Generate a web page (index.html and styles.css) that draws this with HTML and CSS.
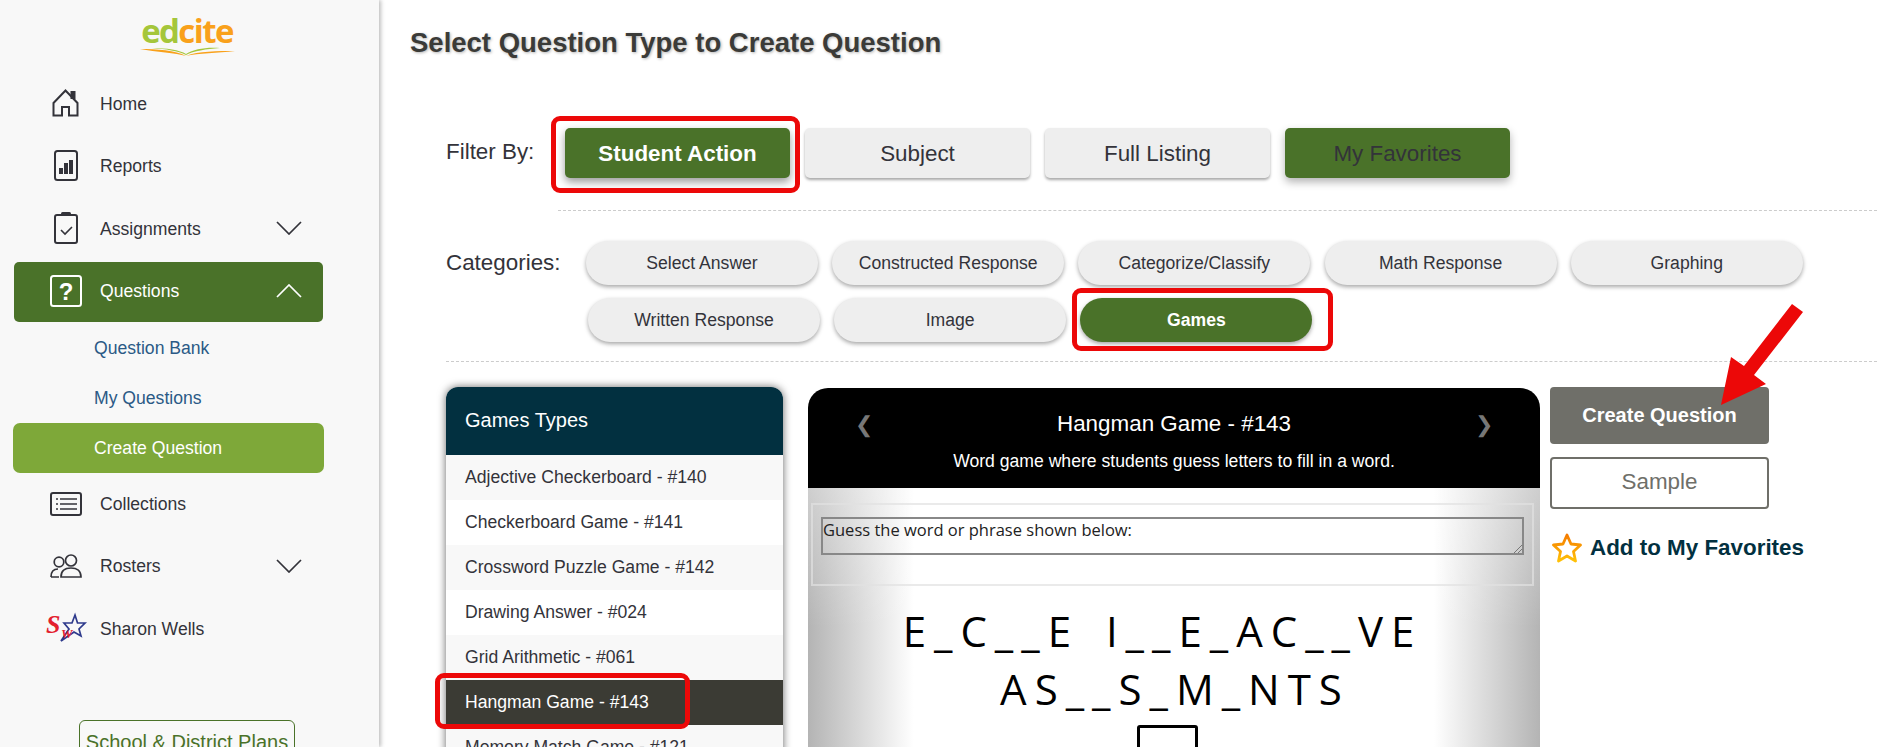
FILE: index.html
```html
<!DOCTYPE html>
<html lang="en">
  <head>
    <meta charset="UTF-8" />
    <meta name="viewport" content="width=device-width, initial-scale=1.0" />
    <title>Select Question Type</title>
    <link rel="stylesheet" href="styles.css">
  </head>
  <body>
    <div class="sidebar">
      <div class="logo">
        <div class="logo-word"><span class="logo-ed">ed</span><span class="logo-cite">cite</span></div>
        <svg class="logo-book" width="95" height="9" viewBox="0 0 95 9">
          <path d="M0 2 C16 2 36 3 46 9 C36 6 16 5 0 2Z" fill="#f9a11b" />
          <path d="M46 9 C58 4 78 4 95 4 C78 6 58 6 46 9Z" fill="#f9a11b" />
          <path d="M12 1 C26 1 40 3 46 7 C54 2 66 0 80 1 C66 2 54 4 46 8 C38 4 26 2 12 1Z" fill="#a5c63b" />
        </svg>
      </div>

      <div class="nav">
        <div class="nav-row">
          <span class="nav-icon">
            <svg width="30" height="30" viewBox="0 0 30 30" fill="none" stroke="#33333a" stroke-width="2">
              <path d="M2.5 14 L14.5 1.5 L26.5 14 V26.5 H18 V18 H11 V26.5 H2.5Z" />
              <rect x="19.5" y="2" width="5" height="8" fill="#33333a" stroke="none" />
            </svg>
          </span>
          <span>Home</span>
        </div>
        <div class="nav-row">
          <span class="nav-icon">
            <svg width="30" height="32" viewBox="0 0 30 32" fill="none" stroke="#33333a" stroke-width="2">
              <rect x="4" y="1" width="22" height="29" rx="2.5" />
              <rect x="8" y="18" width="4" height="6" fill="#33333a" stroke="none" />
              <rect x="13" y="13" width="4" height="11" fill="#33333a" stroke="none" />
              <rect x="18" y="10" width="4" height="14" fill="#33333a" stroke="none" />
            </svg>
          </span>
          <span>Reports</span>
        </div>
        <div class="nav-row">
          <span class="nav-icon">
            <svg width="30" height="32" viewBox="0 0 30 32" fill="none" stroke="#33333a" stroke-width="2">
              <rect x="4" y="3" width="22" height="28" rx="2" />
              <rect x="10" y="0" width="10" height="4" rx="1.5" fill="#33333a" stroke="none" />
              <path d="M10 18 L14 22 L21 15" stroke-width="1.6" />
            </svg>
          </span>
          <span class="text-low">Assignments</span>
          <svg class="chevron" width="26" height="14" viewBox="0 0 26 14" fill="none" stroke="#33333a" stroke-width="1.7"><path d="M1 1 L13 13 L25 1" /></svg>
        </div>
        <div class="nav-row nav-open">
          <span class="nav-icon">
            <svg width="32" height="32" viewBox="0 0 32 32" fill="none" stroke="#fff" stroke-width="2">
              <rect x="1" y="1" width="30" height="30" rx="2.5" />
              <text x="16" y="25" text-anchor="middle" class="question-mark">?</text>
            </svg>
          </span>
          <span>Questions</span>
          <svg class="chevron" width="26" height="14" viewBox="0 0 26 14" fill="none" stroke="#fff" stroke-width="1.7"><path d="M1 13 L13 1 L25 13" /></svg>
        </div>
        <div class="sub-row">Question Bank</div>
        <div class="sub-row">My Questions</div>
        <div class="sub-row sub-current">Create Question</div>
        <div class="nav-row">
          <span class="nav-icon">
            <svg width="32" height="24" viewBox="0 0 32 24" fill="none" stroke="#33333a" stroke-width="2">
              <rect x="1" y="1" width="30" height="22" rx="2" />
              <path d="M10 7 H27 M10 12 H27 M10 17 H27" stroke-width="1.5" />
              <path d="M6 7 H8 M6 12 H8 M6 17 H8" stroke-width="1.5" />
            </svg>
          </span>
          <span>Collections</span>
        </div>
        <div class="nav-row">
          <span class="nav-icon">
            <svg width="32" height="24" viewBox="0 0 32 24" fill="none" stroke="#33333a" stroke-width="1.7">
              <circle cx="9" cy="8" r="4.8" />
              <circle cx="21" cy="6.5" r="5.5" />
              <path d="M1 23 C1 17 4 15 8 15 M1 23 H9" />
              <path d="M11 23 C11 17 15 14 21 14 C27 14 31 17 31 23Z" />
            </svg>
          </span>
          <span>Rosters</span>
          <svg class="chevron" width="26" height="14" viewBox="0 0 26 14" fill="none" stroke="#33333a" stroke-width="1.7"><path d="M1 1 L13 13 L25 1" /></svg>
        </div>
        <div class="nav-row">
          <span class="nav-icon">
            <svg width="40" height="30" viewBox="0 0 40 30">
              <path d="M29 2 L31.5 10 L39 10 L33 16 L35 23 L28 19 L15 28 L23 16 L18 10 L26 10Z" fill="none" stroke="#2e3a8c" stroke-width="1.7" />
              <text x="0" y="20" class="sw-s">S</text>
              <text x="15" y="25" class="sw-w">W</text>
            </svg>
          </span>
          <span class="text-low">Sharon Wells</span>
        </div>
      </div>

      <div class="plans">School &amp; District Plans</div>
    </div>

    <div class="main">
      <h1>Select Question Type to Create Question</h1>

      <div class="filter-row">
        <span class="row-label filter-label">Filter By:</span>
        <button class="filter-btn current marked mark-action">Student Action</button>
        <button class="filter-btn">Subject</button>
        <button class="filter-btn">Full Listing</button>
        <button class="filter-btn favorites">My Favorites</button>
      </div>

      <div class="filter-line"></div>

      <div class="category-block">
        <span class="row-label category-label">Categories:</span>
        <div class="pills">
          <div class="pill-row">
            <button class="pill">Select Answer</button>
            <button class="pill">Constructed Response</button>
            <button class="pill">Categorize/Classify</button>
            <button class="pill">Math Response</button>
            <button class="pill">Graphing</button>
          </div>
          <div class="pill-row second">
            <button class="pill">Written Response</button>
            <button class="pill">Image</button>
            <button class="pill current marked mark-games">Games</button>
          </div>
        </div>
      </div>

      <div class="category-line"></div>

      <div class="content">
        <div class="types">
          <div class="types-head">Games Types</div>
          <div class="type-item">Adjective Checkerboard - #140</div>
          <div class="type-item">Checkerboard Game - #141</div>
          <div class="type-item">Crossword Puzzle Game - #142</div>
          <div class="type-item">Drawing Answer - #024</div>
          <div class="type-item">Grid Arithmetic - #061</div>
          <div class="type-item selected marked mark-hangman">Hangman Game - #143</div>
          <div class="type-item">Memory Match Game - #121</div>
        </div>

        <div class="preview">
          <div class="preview-head">
            <span class="preview-arrow prev">&#10094;</span>
            <div class="preview-title">Hangman Game - #143</div>
            <div class="preview-desc">Word game where students guess letters to fill in a word.</div>
            <span class="preview-arrow next">&#10095;</span>
          </div>
          <div class="preview-body">
            <div class="prompt-box">
              <div class="prompt-input">Guess the word or phrase shown below:
                <svg class="resize-grip" width="9" height="9" viewBox="0 0 9 9" stroke="#777" fill="none"><path d="M1 9 L9 1 M5 9 L9 5" /></svg>
              </div>
            </div>
            <div class="word word-one">E_C__E I__E_AC__VE</div>
            <div class="word word-two">AS__S_M_NTS</div>
            <div class="letter-box"></div>
          </div>
        </div>

        <div class="actions">
          <button class="create-btn">Create Question</button>
          <button class="sample-btn">Sample</button>
          <div class="add-fav">
            <svg width="30" height="30" viewBox="0 0 30 30" fill="none" stroke="url(#starFill)" stroke-width="2.8" stroke-linejoin="round">
              <defs>
                <linearGradient id="starFill" x1="0" y1="0" x2="0" y2="1">
                  <stop offset="0" stop-color="#f57c00" />
                  <stop offset="1" stop-color="#ffc107" />
                </linearGradient>
              </defs>
              <path d="M15 2 L19 11 L28.5 12 L21.5 18.5 L23.5 28 L15 23 L6.5 28 L8.5 18.5 L1.5 12 L11 11Z" />
            </svg>
            <span>Add to My Favorites</span>
          </div>
        </div>
      </div>

      <!-- big red arrow pointing at the create button -->
      <svg class="red-arrow" width="90" height="110" viewBox="0 0 90 110">
        <path d="M79 2 L90 10 L41 73 L53 82 L8 103 L18 55 L31 64Z" fill="#ec0808" />
      </svg>
    </div>
  </body>
</html>
```

FILE: styles.css
```css
html,
body {
  height: 100%;
  margin: 0;
  overflow: hidden;
}

body {
  display: flex;
  font-family: "Liberation Sans", Arial, sans-serif;
  color: #33333a;
  background-color: #fff;
}

button {
  font-family: inherit;
  border: none;
  cursor: pointer;
}

/* Left navigation */
.sidebar {
  flex: 0 0 379px;
  box-sizing: border-box;
  height: 747px;
  overflow: hidden;
  background-color: #f8f8f8;
  box-shadow: 2px 0 4px rgba(0, 0, 0, 0.25);
  position: relative;
  z-index: 1;
}

.logo {
  height: 73px;
  display: flex;
  flex-direction: column;
  align-items: center;
  padding: 11px 5px 0 0;
  box-sizing: border-box;
}

.logo-word {
  font-family: "Open Sans", sans-serif;
  font-size: 33px;
  font-weight: 700;
  line-height: 40px;
  letter-spacing: -1.6px;
}

.logo-ed {
  color: #a5c63b;
}

.logo-cite {
  color: #f9a11b;
}

.logo-book {
  margin-top: -4px;
}

.nav-row {
  display: flex;
  align-items: center;
  height: 62px;
  padding-left: 46px;
  margin: 0 56px 0 14px;
  font-size: 17.6px;
}

.nav-icon {
  flex: 0 0 40px;
  margin-left: -14px;
  margin-right: 14px;
  display: flex;
  justify-content: center;
}

.nav-icon svg {
  overflow: visible;
}

.text-low {
  padding-top: 2px;
}

.nav-row .chevron {
  margin-left: auto;
  margin-right: 21px;
}

.nav-open {
  height: 60px;
  box-sizing: border-box;
  padding-bottom: 2px;
  margin-top: 3px;
  background-color: #4a7229;
  color: #fff;
  border-radius: 5px;
}

.sub-row {
  height: 50px;
  line-height: 52px;
  padding-left: 94px;
  font-size: 17.6px;
  color: #2b5a86;
}

.sub-current {
  margin: 1px 55px 0 13px;
  padding-left: 81px;
  line-height: 50px;
  background-color: #7ea839;
  color: #fff;
  border-radius: 7px;
}

.question-mark {
  font-family: "Liberation Sans", sans-serif;
  font-size: 24px;
  font-weight: bold;
  fill: #fff;
  stroke: none;
}

.sw-s {
  font-family: "Liberation Serif", serif;
  font-style: italic;
  font-weight: bold;
  font-size: 26px;
  fill: #e3202e;
}

.sw-w {
  font-family: "Liberation Serif", serif;
  font-style: italic;
  font-weight: bold;
  font-size: 13px;
  fill: #e3202e;
}

.plans {
  margin: 61px 84px 0 79px;
  height: 44px;
  line-height: 42px;
  text-align: center;
  font-size: 20px;
  color: #4a7229;
  border: 1px solid #4a7229;
  border-radius: 6px;
  box-sizing: border-box;
}

/* Main area */
.main {
  flex: 1;
  min-width: 0;
  height: 747px;
  overflow: hidden;
  position: relative;
}

h1 {
  margin: 28px 0 0 31px;
  font-size: 27.5px;
  line-height: 30px;
  font-weight: bold;
  color: #3b3b38;
  text-shadow: 1px 1px 3px rgba(0, 0, 0, 0.3);
}

.filter-row {
  display: flex;
  align-items: center;
  gap: 15px;
  margin: 70px 0 0 67px;
}

.row-label {
  font-size: 22.4px;
  color: #33333a;
}

.filter-label {
  flex: 0 0 108px;
  margin-right: -4px;
  position: relative;
  top: -1px;
}

.filter-btn {
  width: 225px;
  height: 50px;
  padding-top: 2px;
  background-color: #eee;
  color: #33333a;
  font-size: 22.4px;
  border-radius: 5px;
  box-shadow: 0 2px 3px rgba(0, 0, 0, 0.35);
}

.filter-btn.current {
  background-color: #4a7229;
  color: #fff;
  font-weight: bold;
  box-shadow: 0 4px 8px rgba(0, 0, 0, 0.4);
}

.filter-btn.favorites {
  background-color: #4a7229;
  box-shadow: 0 4px 8px rgba(0, 0, 0, 0.3);
}

.filter-line {
  margin: 32px 0 0 179px;
  border-top: 1px dashed #ccc;
}

.category-block {
  display: flex;
  margin: 30px 0 0 67px;
}

.category-label {
  flex: 0 0 140px;
  line-height: 44px;
}

.pill-row {
  display: flex;
  gap: 14.2px;
}

.pill-row.second {
  margin: 13px 0 0 2px;
}

.pill {
  width: 232px;
  height: 44px;
  background-color: #eee;
  color: #33333a;
  font-size: 17.6px;
  border-radius: 22px;
  box-shadow: 0 2px 4px rgba(0, 0, 0, 0.35);
}

.pill.current {
  background-color: #4a7229;
  color: #fff;
  font-weight: bold;
}

.category-line {
  margin: 19px 0 0 67px;
  border-top: 1px dashed #ccc;
}

/* Red annotation boxes drawn over the picked options */
.marked {
  position: relative;
}

.marked::after {
  content: "";
  position: absolute;
  border: 5px solid #ec0808;
  border-radius: 9px;
  pointer-events: none;
}

.mark-action::after {
  inset: -12px -10px -15px -14px;
}

.mark-games::after {
  inset: -10px -21px -9px -8px;
}

.mark-hangman::after {
  inset: -7px auto -4px -11px;
  width: 245px;
}

.content {
  display: flex;
  align-items: flex-start;
  margin: 25px 0 0 67px;
}

.types {
  flex: 0 0 337px;
  background-color: #fff;
  border-radius: 12px 12px 0 0;
  box-shadow: 0 0 8px rgba(0, 0, 0, 0.6);
}

.types-head {
  height: 68px;
  line-height: 66px;
  padding-left: 19px;
  background-color: #023040;
  color: #fff;
  font-size: 20px;
  border-radius: 12px 12px 0 0;
}

.type-item {
  height: 45px;
  line-height: 45px;
  padding-left: 19px;
  font-size: 17.6px;
}

.type-item:nth-child(even) {
  background-color: #f8f8f8;
}

.type-item.selected {
  background-color: #3b3b34;
  color: #fff;
}

.preview {
  flex: 0 0 732px;
  margin: 1px 0 0 25px;
}

.preview-head {
  position: relative;
  height: 100px;
  box-sizing: border-box;
  padding-top: 20px;
  background-color: #000;
  color: #fff;
  text-align: center;
  border-radius: 20px 20px 0 0;
}

.preview-title {
  font-size: 22.4px;
  line-height: 32px;
}

.preview-desc {
  margin-top: 9px;
  font-size: 17.6px;
  line-height: 24px;
}

.preview-arrow {
  position: absolute;
  top: 24px;
  font-size: 22px;
  color: #777;
}

.prev {
  left: 47px;
}

.next {
  right: 47px;
}

/* grey fading in from both sides, a little lighter at the top */
.preview-body {
  height: 259px;
  padding: 15px 6px 0 3px;
  box-sizing: border-box;
  background:
    linear-gradient(to bottom, rgba(255, 255, 255, 0.35), rgba(255, 255, 255, 0) 140px),
    linear-gradient(to right, #b4b4b4 0, #fff 106px, #fff 626px, #b4b4b4 100%);
  text-align: center;
}

.prompt-box {
  height: 83px;
  box-sizing: border-box;
  padding: 12px 8px 0;
  border: 2px solid rgba(225, 225, 225, 0.7);
}

.prompt-input {
  position: relative;
  height: 38px;
  box-sizing: border-box;
  border: 2px solid #888;
  font-family: "Open Sans", sans-serif;
  font-size: 16.5px;
  line-height: 22px;
  color: #222;
  text-align: left;
}

.resize-grip {
  position: absolute;
  right: 0;
  bottom: 0;
}

.word {
  font-family: "Open Sans", sans-serif;
  font-size: 42px;
  line-height: 58px;
  letter-spacing: 8px;
  word-spacing: 8px;
  color: #000;
  white-space: nowrap;
}

.word-one {
  margin: 16px 20px 0 0;
}

.word-two {
  padding-left: 5px;
}

.letter-box {
  width: 55px;
  height: 40px;
  margin: 7px 0 0 326px;
  border: 3px solid #000;
  border-radius: 3px;
}

.actions {
  flex: 0 0 219px;
  margin-left: 10px;
}

.create-btn {
  display: block;
  width: 219px;
  height: 57px;
  background-color: #6f6f69;
  color: #fff;
  font-size: 20px;
  font-weight: bold;
  border-radius: 4px;
}

.sample-btn {
  display: block;
  width: 219px;
  height: 52px;
  margin-top: 13px;
  padding-bottom: 3px;
  background-color: #fff;
  color: #6f6f69;
  font-size: 22.4px;
  border: 2px solid #6f6f69;
  border-radius: 4px;
}

.add-fav {
  display: flex;
  align-items: center;
  gap: 8px;
  margin: 24px -60px 0 2px;
  font-size: 22.4px;
  font-weight: bold;
  color: #023040;
  white-space: nowrap;
}

.red-arrow {
  position: absolute;
  left: 1334px;
  top: 302px;
}
```
